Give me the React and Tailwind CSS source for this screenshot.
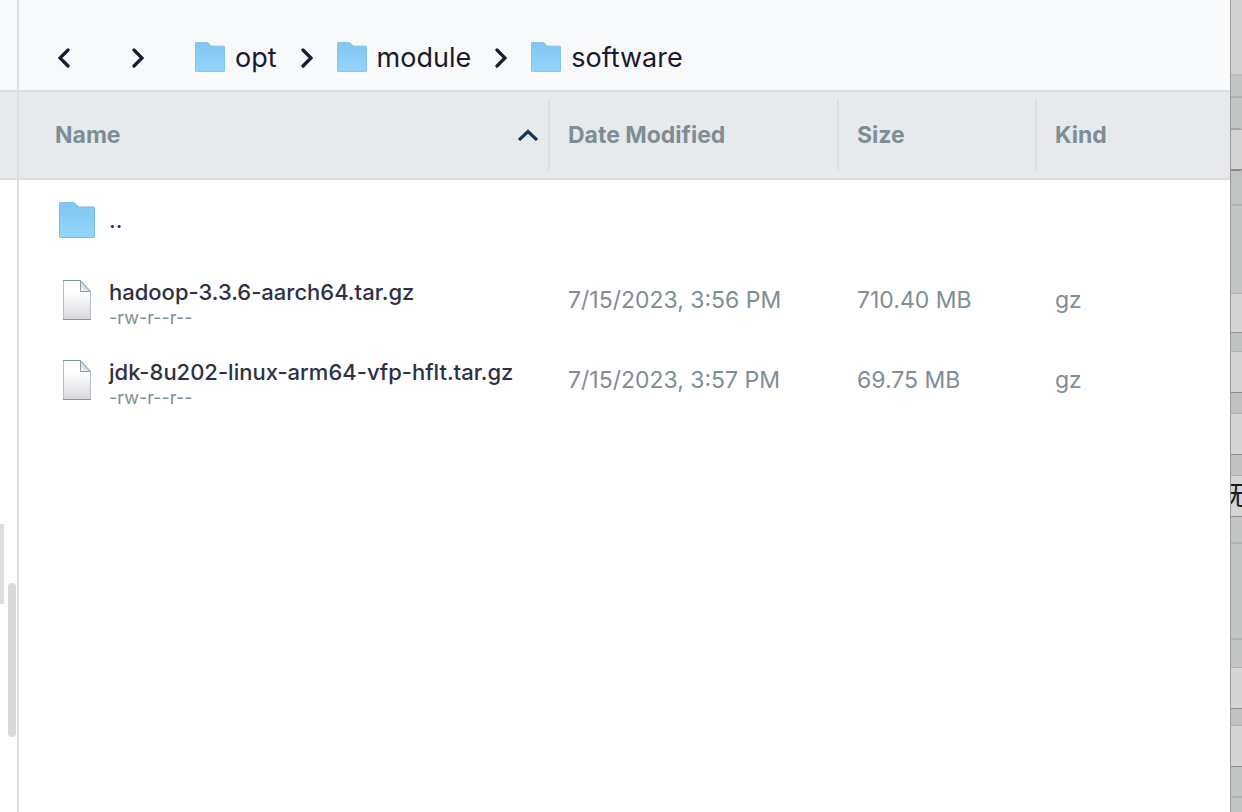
import { useState } from "react";

const LEFT = "M10 2L2 10l8 8";
const RIGHT = "M2 2l8 8-8 8";

const folders = ["opt", "module", "software"];

const files = [
  {
    name: "hadoop-3.3.6-aarch64.tar.gz",
    mode: "-rw-r--r--",
    modified: "7/15/2023, 3:56 PM",
    size: "710.40 MB",
    kind: "gz",
  },
  {
    name: "jdk-8u202-linux-arm64-vfp-hflt.tar.gz",
    mode: "-rw-r--r--",
    modified: "7/15/2023, 3:57 PM",
    size: "69.75 MB",
    kind: "gz",
  },
];

// Edge of the window that sits behind this one
const strip = [
  "h-[74px] bg-[#d1d1d1]",
  "h-[22px] border-t-2 border-[#bcbcbc] bg-[#c3c5c4]",
  "h-[32px] border-t-2 border-[#afb1b0] bg-[#c3c5c4]",
  "h-[43px] rounded-r-xs border-y-2 border-t-[#a5a5a5] border-b-[#8b8b8b] bg-[#d3d3d3]",
  "h-[33px] bg-[#c2c4c3]",
  "h-[89px] border-t-2 border-[#b1b3b2] bg-[#c3c5c4]",
  "h-[40px] border-y border-t-[#b1b1b1] border-b-[#969696] bg-[#d5d5d5]",
  "h-[18px] bg-[#c0c2c1]",
  "h-[42px] border-y border-t-[#b1b1b1] border-b-[#8d8d8d] bg-[#d5d5d5]",
  "h-[20px] bg-[#c0c2c1]",
  "h-[42px] border-y border-t-[#b1b1b1] border-b-[#8d8d8d] bg-[#d5d5d5]",
  "h-[20px] bg-[#c0c2c1]",
];

const stripBottom = [
  "h-[25px] bg-[#c3c5c4]",
  "h-[96px] border-t-2 border-[#b1b3b2] bg-[#c3c5c4]",
  "h-[29px] border-t-2 border-[#b1b3b2] bg-[#c3c5c4]",
  "h-[42px] border-y border-t-[#b1b1b1] border-b-[#8d8d8d] bg-[#d5d5d5]",
  "h-[16px] bg-[#c0c2c1]",
  "h-[42px] border-y border-t-[#b1b1b1] border-b-[#8d8d8d] bg-[#d5d5d5]",
  "h-[29px] bg-[#c3c5c4]",
  "flex-1 border-t-2 border-[#b1b3b2] bg-[#c3c5c4]",
];

function Chevron({ d }) {
  return (
    <svg width="12" height="20" viewBox="0 0 12 20" fill="none" aria-hidden="true">
      <path d={d} stroke="#1a1a2e" strokeWidth="3.200" strokeLinecap="round" />
    </svg>
  );
}

function FolderIcon({ size }) {
  return (
    <svg width={size} height={size} viewBox="0 0 36 36" className="shrink-0" aria-hidden="true">
      <defs>
        <linearGradient id="folder" x1="0" y1="0" x2="0" y2="1">
          <stop offset="0" stopColor="#7fc6f2" />
          <stop offset="1" stopColor="#95d4f9" />
        </linearGradient>
      </defs>
      <path
        d="M.5 1.5a1 1 0 0 1 1-1h12.6c.7 0 1.200.200 1.700.700l3.400 3.300c.400.400.700.500 1.200.500h14.100a1 1 0 0 1 1 1v28.500a1 1 0 0 1-1 1h-33a1 1 0 0 1-1-1z"
        fill="url(#folder)"
        stroke="#75bdea"
      />
    </svg>
  );
}

function FileIcon() {
  return (
    <svg width="28" height="40" viewBox="0 0 28 40" className="shrink-0" aria-hidden="true">
      <defs>
        <linearGradient id="sheet" x1="0" y1="0" x2="0" y2="1">
          <stop offset="0.300" stopColor="#ffffff" />
          <stop offset="1" stopColor="#d5dadd" />
        </linearGradient>
        <linearGradient id="fold" x1="0" y1="1" x2="1" y2="0">
          <stop offset="0.100" stopColor="#ffffff" />
          <stop offset="0.600" stopColor="#b9c5cc" />
        </linearGradient>
      </defs>
      <path d="M.5.5h17l10 11v28H.5z" fill="url(#sheet)" stroke="#b4c0c7" />
      <path d="M0 .5h17.500M0 39.500h28" stroke="#82939e" />
      <path d="M17.500.5v11h10z" fill="url(#fold)" stroke="#8c9ca6" />
    </svg>
  );
}

function HeaderCell({ children }) {
  return (
    <th scope="col" className="border-y-2 border-[#d8dee2] bg-[#e6eaed] p-0 text-left">
      <div className="my-2 flex h-[70px] items-center border-r-2 border-[#d8dee2] pr-2 pl-[18px] font-bold">
        {children}
      </div>
    </th>
  );
}

export default function App() {
  const [ascending, setAscending] = useState(true);
  const rows = ascending ? files : [...files].reverse();

  return (
    <div className="flex min-h-screen overflow-hidden bg-white font-[Inter,sans-serif] text-[23px] text-[#7e8e94]">
      {/* Sliver of the left pane */}
      <aside className="flex w-[19px] shrink-0 flex-col border-r-2 border-[#d8dee2]">
        <div className="h-[90px] bg-[#f8f9fb]" />
        <div className="h-[90px] border-y-2 border-[#d8dee2] bg-[#e6eaed]" />
        <div className="flex flex-1 gap-1">
          <div className="mt-[344px] h-20 w-1 bg-[#d8dee2]" />
          <div className="mt-[403px] h-[154px] w-2 rounded-full bg-[#d8d8d8]" />
        </div>
      </aside>

      <main className="min-w-0 flex-1">
        {/* Path bar */}
        <nav className="flex h-[90px] items-center bg-[#f8f9fb] pt-[26px] pl-[39px] text-[27px] text-[#1a1a2e]">
          <button type="button" aria-label="Back">
            <Chevron d={LEFT} />
          </button>
          <button type="button" aria-label="Forward" className="ml-[62px]">
            <Chevron d={RIGHT} />
          </button>
          <ol className="ml-[51px] flex items-center leading-8">
            {folders.map((folder, i) => (
              <li key={folder} className="flex items-center">
                {i > 0 && (
                  <span className="mx-6">
                    <Chevron d={RIGHT} />
                  </span>
                )}
                <a href={`#${folder}`} className="flex items-start gap-[10px]">
                  <FolderIcon size={30} />
                  {folder}
                </a>
              </li>
            ))}
          </ol>
        </nav>

        {/* File list */}
        <table className="w-full table-fixed border-separate border-spacing-0">
          <colgroup>
            <col className="w-[531px]" />
            <col className="w-[289px]" />
            <col className="w-[198px]" />
            <col />
          </colgroup>
          <thead>
            <tr>
              <th
                scope="col"
                aria-sort={ascending ? "ascending" : "descending"}
                className="border-y-2 border-[#d8dee2] bg-[#e6eaed] p-0 text-left"
              >
                <div className="my-2 h-[70px] border-r-2 border-[#d8dee2]">
                  <button
                    type="button"
                    onClick={() => setAscending(!ascending)}
                    className="flex h-full w-full items-center justify-between pr-[10px] pl-9 font-bold"
                  >
                    Name
                    <svg
                      width="20"
                      height="12"
                      viewBox="0 0 20 12"
                      fill="none"
                      className={ascending ? "" : "rotate-180"}
                      aria-hidden="true"
                    >
                      <path d="M1 11l9-8.500 9 8.500" stroke="#1c3550" strokeWidth="3.200" />
                    </svg>
                  </button>
                </div>
              </th>
              <HeaderCell>Date Modified</HeaderCell>
              <HeaderCell>Size</HeaderCell>
              <th scope="col" className="border-y-2 border-[#d8dee2] bg-[#e6eaed] p-0 pl-[18px] text-left font-bold">
                Kind
              </th>
            </tr>
          </thead>
          <tbody>
            <tr>
              <td className="h-20 p-0 pl-10" colSpan={4}>
                <a href="#parent" className="flex items-center gap-[14px] text-[#2f3044]">
                  <FolderIcon size={36} />
                  ..
                </a>
              </td>
            </tr>
            {rows.map((file) => (
              <tr key={file.name}>
                <td className="h-20 p-0 pl-11">
                  <div className="flex items-center gap-[18px] whitespace-nowrap">
                    <FileIcon />
                    <div className="pt-2">
                      <div className="text-[22px] leading-7 font-medium text-[#2f3044]">{file.name}</div>
                      <div className="text-lg leading-6">{file.mode}</div>
                    </div>
                  </div>
                </td>
                <td className="p-0 pl-[18px]">{file.modified}</td>
                <td className="p-0 pl-[18px]">{file.size}</td>
                <td className="p-0 pl-[18px]">{file.kind}</td>
              </tr>
            ))}
          </tbody>
        </table>
      </main>

      {/* Window behind */}
      <div className="flex w-3 shrink-0 flex-col overflow-hidden border-l border-[#9a9a9a] bg-[#c3c5c4]">
        {strip.map((cls, i) => (
          <div key={i} className={cls} />
        ))}
        <div className="flex h-[42px] justify-center overflow-hidden border-y border-t-[#b1b1b1] border-b-[#8d8d8d] bg-[#d5d5d5] font-['Noto_Sans_CJK_SC',sans-serif] text-[26px] leading-9 text-[#1c1c1c]">
          <span className="shrink-0">无</span>
        </div>
        {stripBottom.map((cls, i) => (
          <div key={i} className={cls} />
        ))}
      </div>
    </div>
  );
}
